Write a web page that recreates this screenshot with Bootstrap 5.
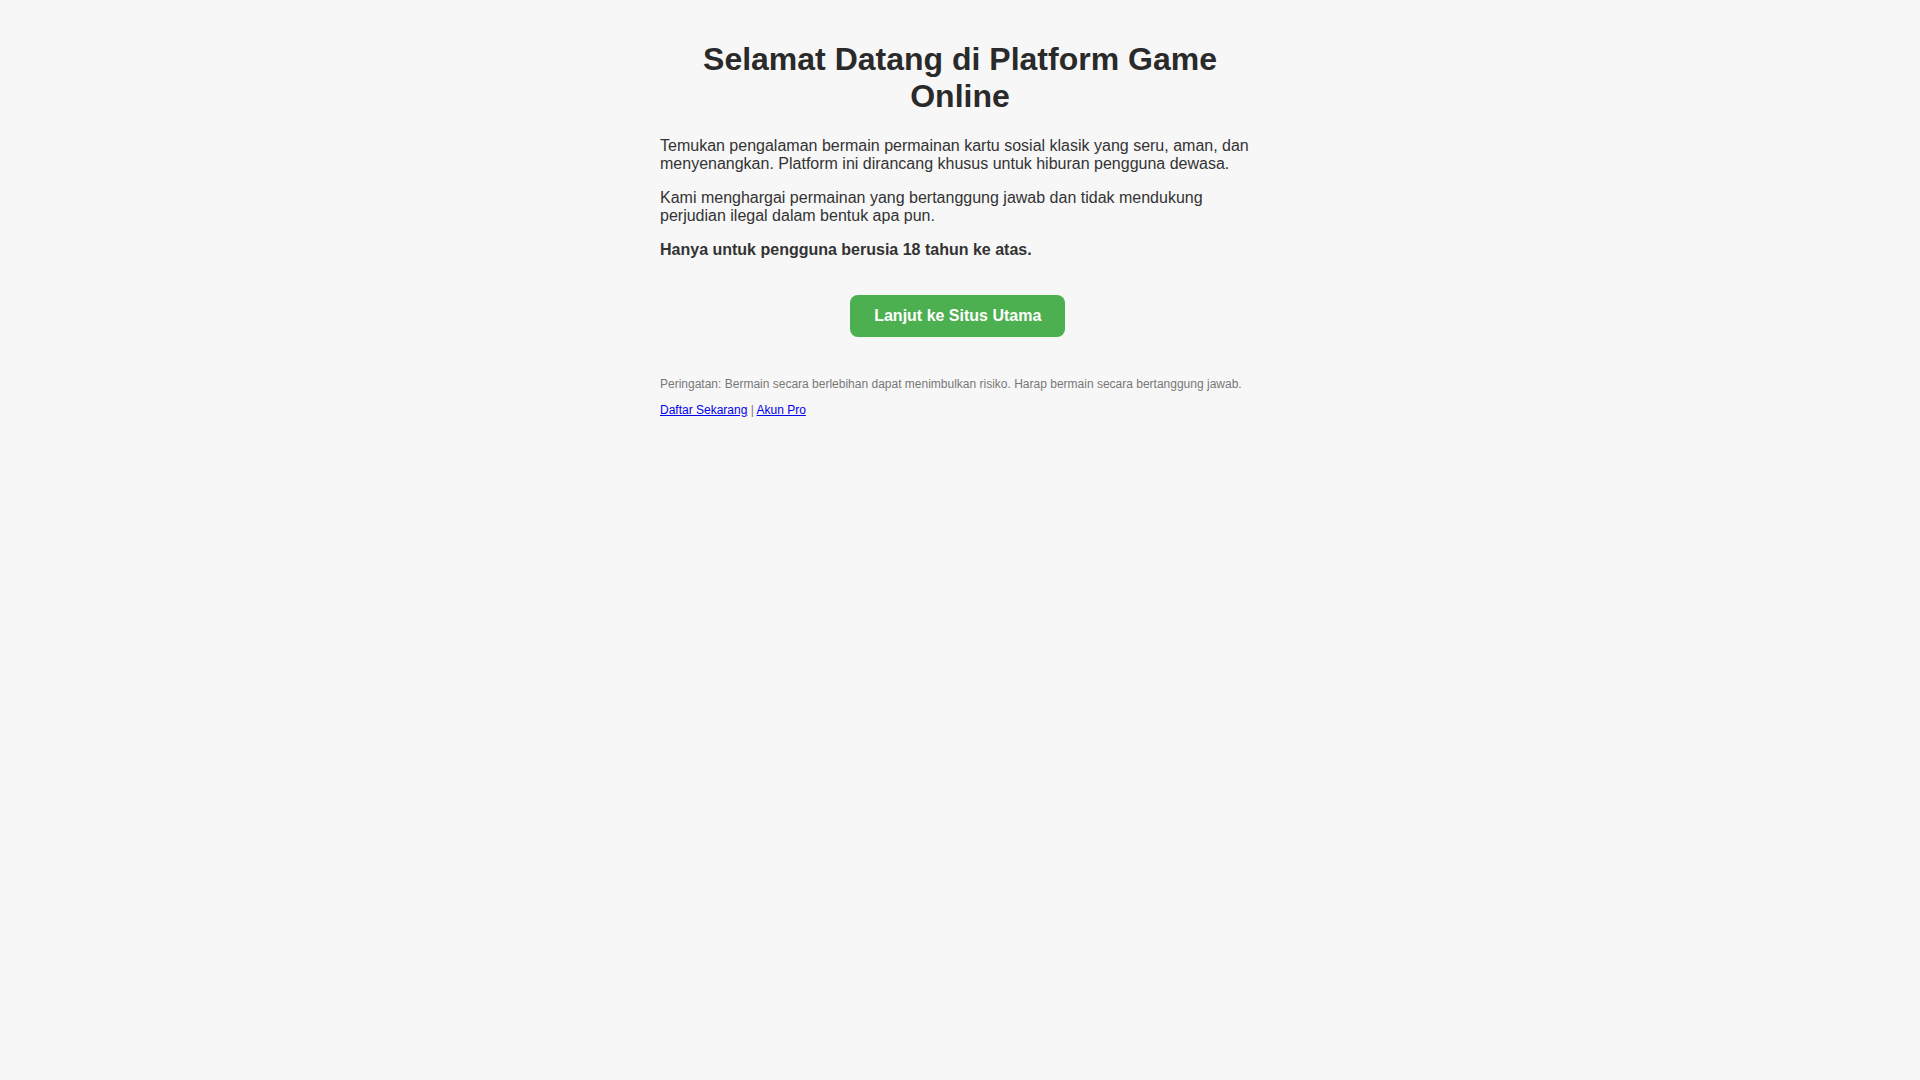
<!DOCTYPE html>
<html lang="id">
<head>
<meta charset="utf-8">
<meta name="viewport" content="width=device-width, initial-scale=1">
<title>Selamat Datang di Platform Game Online</title>
<link href="https://cdn.jsdelivr.net/npm/bootstrap@5.3.0/dist/css/bootstrap.min.css" rel="stylesheet">
<style>
  body {
    background: #f7f7f7;
    color: #333;
    font-family: "Liberation Sans", Arial, sans-serif;
    font-size: 16px;
    line-height: 18px;
  }
  .welcome { max-width: 600px; padding-top: 41px; }
  .welcome-title {
    color: #2a2a2a;
    font-size: 32px;
    line-height: 37px;
    margin-bottom: 22px;
  }
  .btn-continue {
    --bs-btn-padding-x: 24px;
    --bs-btn-padding-y: 12px;
    --bs-btn-line-height: 18px;
    --bs-btn-font-weight: 700;
    --bs-btn-border-width: 0;
    --bs-btn-border-radius: 8px;
    --bs-btn-color: #fff;
    --bs-btn-bg: #4caf50;
    --bs-btn-hover-color: #fff;
    --bs-btn-hover-bg: #43a047;
  }
  .action { margin: 36px 0 40px; }
  .notice { color: #777; font-size: 12px; line-height: 14px; }
  .notice p { margin-bottom: 12px; }
  .notice a { color: #00e; }
</style>
</head>
<body>
<main class="welcome container-fluid px-0">
  <h1 class="welcome-title text-center fw-bold">Selamat Datang di Platform Game Online</h1>
  <p>Temukan pengalaman bermain permainan kartu sosial klasik yang seru, aman, dan menyenangkan. Platform ini dirancang khusus untuk hiburan pengguna dewasa.</p>
  <p>Kami menghargai permainan yang bertanggung jawab dan tidak mendukung perjudian ilegal dalam bentuk apa pun.</p>
  <p><strong>Hanya untuk pengguna berusia 18 tahun ke atas.</strong></p>
  <div class="action text-center"><a class="btn btn-continue" href="#">Lanjut ke Situs Utama</a>&nbsp;</div>
  <footer class="notice">
    <p>Peringatan: Bermain secara berlebihan dapat menimbulkan risiko. Harap bermain secara bertanggung jawab.</p>
    <p><a href="#">Daftar Sekarang</a> | <a href="#">Akun Pro</a></p>
  </footer>
</main>
<script src="https://cdn.jsdelivr.net/npm/bootstrap@5.3.0/dist/js/bootstrap.bundle.min.js"></script>
</body>
</html>
